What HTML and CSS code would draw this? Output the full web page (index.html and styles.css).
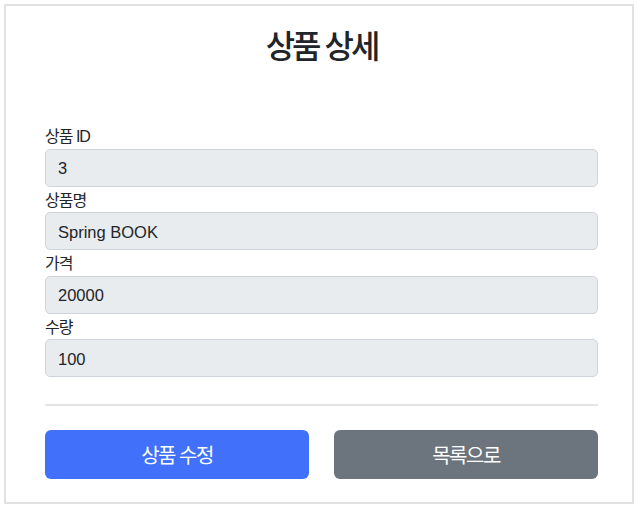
FILE: index.html
```html
<!DOCTYPE html>
<html lang="ko">
<head>
    <meta charset="UTF-8">
    <meta name="viewport" content="width=device-width, initial-scale=1.0">
    <title>상품 상세</title>
    <link rel="stylesheet" href="styles.css">
</head>
<body>
    <div class="item__frame">
        <div class="item__header">
            <h2>상품 상세</h2>
        </div>

        <div class="form__group">
            <label for="itemId">상품 ID</label>
            <input type="text" id="itemId" name="itemId" class="form__control" value="3" readonly>
        </div>
        <div class="form__group">
            <label for="itemName">상품명</label>
            <input type="text" id="itemName" name="itemName" class="form__control" value="Spring BOOK" readonly>
        </div>
        <div class="form__group">
            <label for="price">가격</label>
            <input type="text" id="price" name="price" class="form__control" value="20000" readonly>
        </div>
        <div class="form__group">
            <label for="quantity">수량</label>
            <input type="text" id="quantity" name="quantity" class="form__control" value="100" readonly>
        </div>

        <hr class="item__divider">

        <div class="btn__row">
            <button type="button" class="btn btn--primary">상품 수정</button>
            <button type="button" class="btn btn--secondary">목록으로</button>
        </div>
    </div>
</body>
</html>
```

FILE: styles.css
```css
body {
    margin: 0;
    background: #fff;
    color: #212529;
    font-family: "Liberation Sans", "Noto Sans CJK KR", sans-serif;
    font-size: 16px;
}
.item__frame {
    box-sizing: border-box;
    width: 630px;
    height: 500px;
    margin: 4px 0 0 4px;
    padding: 0 34px 0 39px;
    border: 2px solid #e2e2e2;
}
.item__header {
    height: 117px;
    text-align: center;
}
.item__header h2 {
    margin: 0;
    padding-top: 21px;
    font-size: 32px;
    font-weight: 500;
    line-height: 40px;
    letter-spacing: -3px;
}
.form__group label {
    display: block;
    height: 25.5px;
    padding-top: 1px;
    box-sizing: border-box;
    line-height: 25.5px;
    letter-spacing: -1px;
}
.form__control {
    display: block;
    box-sizing: border-box;
    width: 100%;
    height: 38px;
    margin: 0;
    padding: 2px 12px 0;
    border: 1px solid #ced4da;
    border-radius: 5px;
    background: #e9ecef;
    color: #212529;
    font-family: inherit;
    font-size: 16.5px;
}
.item__divider {
    margin: 27px 0 24px;
    border: none;
    border-top: 2px solid #e4e4e4;
}
.btn__row {
    display: flex;
    gap: 25px;
}
.btn {
    flex: 1;
    height: 49px;
    border: none;
    border-radius: 6px;
    color: #fff;
    font-family: inherit;
    font-size: 20px;
    letter-spacing: -1.5px;
    cursor: pointer;
}
.btn--primary {
    background: #4171fb;
}
.btn--secondary {
    background: #6c757d;
}
```
